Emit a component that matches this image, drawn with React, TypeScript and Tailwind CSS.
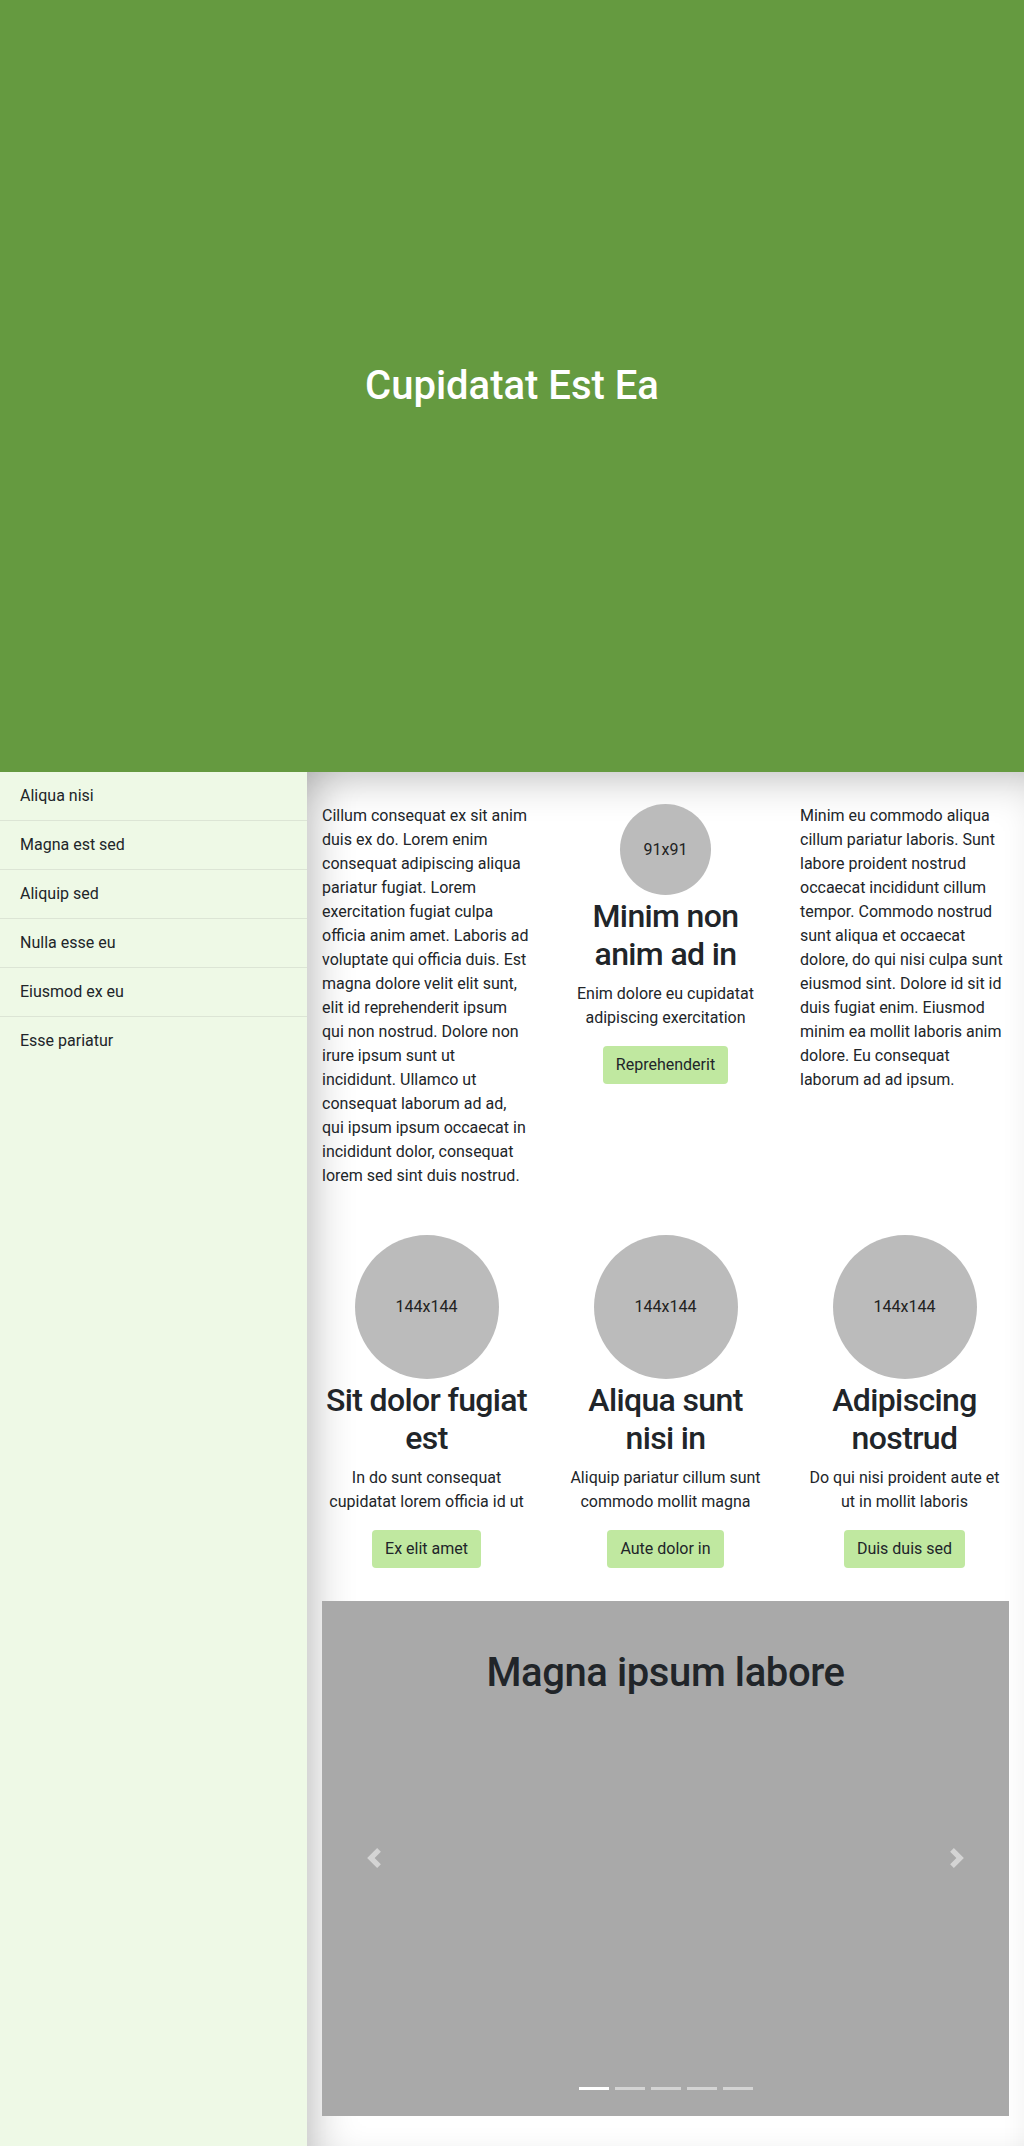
const menu = [
  "Aliqua nisi",
  "Magna est sed",
  "Aliquip sed",
  "Nulla esse eu",
  "Eiusmod ex eu",
  "Esse pariatur",
];

const features = [
  {
    title: "Sit dolor fugiat est",
    text: "In do sunt consequat cupidatat lorem officia id ut",
    button: "Ex elit amet",
  },
  {
    title: "Aliqua sunt nisi in",
    text: "Aliquip pariatur cillum sunt commodo mollit magna",
    button: "Aute dolor in",
  },
  {
    title: "Adipiscing nostrud",
    text: "Do qui nisi proident aute et ut\u00a0in mollit laboris",
    button: "Duis duis sed",
  },
];

function Placeholder({ size, label }: { size: number; label: string }) {
  return (
    <div
      className={`mx-auto flex items-center justify-center rounded-full bg-[#bbbbbb] text-[16px] text-[#222] ${
        size === 91 ? "h-[91px] w-[91px] mb-[2px]" : "h-[144px] w-[144px] mb-[2px]"
      }`}
    >
      {label}
    </div>
  );
}

function GreenButton({ children }: { children: string }) {
  return (
    <button className="rounded-[4px] border border-transparent bg-[#c0e8a0] px-3 py-[6px] text-[16px] leading-6 text-[#212529]">
      {children}
    </button>
  );
}

function Chevron({ flip }: { flip?: boolean }) {
  return (
    <svg
      width="20"
      height="20"
      viewBox="0 0 8 8"
      className={flip ? "rotate-180" : ""}
    >
      <path
        fill="#fff"
        fillOpacity="0.5"
        d="M5.25 0l-4 4 4 4 1.5-1.5L4.25 4l2.5-2.5L5.25 0z"
      />
    </svg>
  );
}

export default function App() {
  return (
    <div className="font-['Roboto','Liberation_Sans',sans-serif] text-[#212529]">
      <header className="flex h-[772px] items-center justify-center bg-[#659a40]">
        <h1 className="text-[40px] font-medium leading-[1.2] text-white">
          Cupidatat Est Ea
        </h1>
      </header>

      <div className="flex">
        <aside className="w-[307px] shrink-0 bg-[#eef9e6]">
          <ul>
            {menu.map((item, i) => (
              <li
                key={item}
                className={`px-5 py-3 text-[16px] leading-6 ${
                  i < menu.length - 1 ? "border-b border-[#dce5d5]" : ""
                }`}
              >
                {item}
              </li>
            ))}
          </ul>
        </aside>

        <main className="flex-1 px-[15px] pt-8 pb-[31px] shadow-[inset_30px_0_40px_-20px_rgba(0,0,0,0.2),inset_0_30px_40px_-20px_rgba(0,0,0,0.2)]">
          <div className="-mx-[15px] grid grid-cols-3">
            <div className="px-[15px]">
              <p className="text-[16px] leading-6">
                Cillum consequat ex sit anim duis ex do. Lorem enim consequat
                adipiscing aliqua pariatur fugiat. Lorem exercitation fugiat
                culpa officia anim amet. Laboris ad voluptate qui officia duis.
                Est magna dolore velit elit sunt, elit id reprehenderit ipsum
                qui non nostrud. Dolore non irure ipsum sunt ut incididunt.
                Ullamco ut consequat laborum ad ad, qui ipsum ipsum occaecat in
                incididunt dolor, consequat lorem sed sint duis nostrud.
              </p>
            </div>
            <div className="px-[15px] text-center">
              <Placeholder size={91} label="91x91" />
              <h2 className="mb-2 text-[32px] font-medium leading-[1.2] tracking-[-0.02em]">
                Minim non anim ad in
              </h2>
              <p className="mb-4 text-[16px] leading-6">
                Enim dolore eu cupidatat adipiscing exercitation
              </p>
              <GreenButton>Reprehenderit</GreenButton>
            </div>
            <div className="px-[15px]">
              <p className="text-[16px] leading-6">
                Minim eu commodo aliqua cillum pariatur laboris. Sunt labore
                proident nostrud occaecat incididunt cillum tempor. Commodo
                nostrud sunt aliqua et occaecat dolore, do qui nisi culpa sunt
                eiusmod sint. Dolore id sit id duis fugiat enim. Eiusmod minim
                ea mollit laboris anim dolore. Eu consequat laborum ad ad
                ipsum.
              </p>
            </div>
          </div>

          <div className="-mx-[15px] mt-[47px] grid grid-cols-3">
            {features.map((f) => (
              <div key={f.title} className="px-[15px] text-center">
                <Placeholder size={144} label="144x144" />
                <h2 className="mb-2 text-[32px] font-medium leading-[1.2] tracking-[-0.02em]">
                  {f.title}
                </h2>
                <p className="mb-4 text-[16px] leading-6">{f.text}</p>
                <GreenButton>{f.button}</GreenButton>
              </div>
            ))}
          </div>

          <div className="relative mt-[33px] h-[515px] bg-[#a9a9a9]">
            <h2 className="pt-12 text-center text-[40px] font-medium leading-[1.2] tracking-[-0.01em]">
              Magna ipsum labore
            </h2>
            <div className="absolute inset-y-0 left-0 flex w-[15%] items-center justify-center">
              <Chevron />
            </div>
            <div className="absolute inset-y-0 right-0 flex w-[15%] items-center justify-center">
              <Chevron flip />
            </div>
            <div className="absolute bottom-[26px] left-0 right-0 flex justify-center">
              {[0, 1, 2, 3, 4].map((i) => (
                <span
                  key={i}
                  className={`mx-[3px] h-[3px] w-[30px] ${
                    i === 0 ? "bg-white" : "bg-white/50"
                  }`}
                />
              ))}
            </div>
          </div>
        </main>
      </div>
    </div>
  );
}
